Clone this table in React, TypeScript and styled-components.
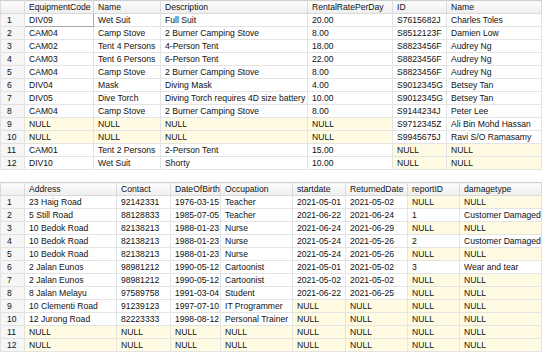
import styled, { createGlobalStyle } from "styled-components";

type Cell = string | null;

interface GridProps {
    columns: { title: string; width: number }[];
    rows: Cell[][];
    focusFirst?: boolean;
}

const GlobalStyle = createGlobalStyle`
  html, body {
    margin: 0;
    padding: 0;
    background: #ffffff;
  }
  body {
    font-family: "Liberation Sans", Arial, sans-serif;
    font-size: 8.6px;
    color: #111111;
  }
`;

const Page = styled.div`
  width: 543px;
  height: 353px;
  display: flex;
  flex-direction: column;
  gap: 12px;
  overflow: hidden;
`;

const Table = styled.table`
  border-collapse: collapse;
  table-layout: fixed;
  width: 541px;
  border-left: 1px solid #cfcfcf;
`;

const Row = styled.tr`
  height: 13px;
`;

const HeadCell = styled.th`
  height: 12px;
  padding: 0 0 0 4px;
  text-align: left;
  font-weight: normal;
  white-space: nowrap;
  overflow: hidden;
  background: linear-gradient(#fdfdfd, #eeeeee);
  border: 1px solid #dadada;
  border-top-color: #d0d0d0;
  line-height: 12px;
`;

const RowNumber = styled.td`
  height: 12px;
  padding: 0 0 0 6px;
  white-space: nowrap;
  background: #f6f6f6;
  border: 1px solid #e2e2e2;
  line-height: 12px;
`;

const DataCell = styled.td<{ $null?: boolean; $focus?: boolean }>`
  height: 12px;
  padding: 0 0 0 4px;
  white-space: nowrap;
  overflow: hidden;
  line-height: 12px;
  background: ${(p) => (p.$null ? "#fffbe3" : "#ffffff")};
  border: 1px solid ${(p) => (p.$focus ? "#a9a9a9" : "#e4e4e4")};
`;

function Grid({ columns, rows, focusFirst }: GridProps) {
    return (
        <Table>
            <colgroup>
                <col style={{ width: 24 }} />
                {columns.map((c, i) => (
                    <col key={i} style={{ width: c.width }} />
                ))}
            </colgroup>
            <thead>
                <Row>
                    <HeadCell />
                    {columns.map((c, i) => (
                        <HeadCell key={i}>{c.title}</HeadCell>
                    ))}
                </Row>
            </thead>
            <tbody>
                {rows.map((r, ri) => (
                    <Row key={ri}>
                        <RowNumber>{ri + 1}</RowNumber>
                        {r.map((v, ci) => (
                            <DataCell key={ci} $null={v === null} $focus={focusFirst && ri === 0 && ci === 0}>
                                {v === null ? "NULL" : v}
                            </DataCell>
                        ))}
                    </Row>
                ))}
            </tbody>
        </Table>
    );
}

const equipmentColumns = [
    { title: "EquipmentCode", width: 69 },
    { title: "Name", width: 67 },
    { title: "Description", width: 147 },
    { title: "RentalRatePerDay", width: 85 },
    { title: "ID", width: 54 },
    { title: "Name", width: 95 },
];

const equipmentRows: Cell[][] = [
    ["DIV09", "Wet Suit", "Full Suit", "20.00", "S7615682J", "Charles Toles"],
    ["CAM04", "Camp Stove", "2 Burner Camping Stove", "8.00", "S8512123F", "Damien Low"],
    ["CAM02", "Tent 4 Persons", "4-Person Tent", "18.00", "S8823456F", "Audrey Ng"],
    ["CAM03", "Tent 6 Persons", "6-Person Tent", "22.00", "S8823456F", "Audrey Ng"],
    ["CAM04", "Camp Stove", "2 Burner Camping Stove", "8.00", "S8823456F", "Audrey Ng"],
    ["DIV04", "Mask", "Diving Mask", "4.00", "S9012345G", "Betsey Tan"],
    ["DIV05", "Dive Torch", "Diving Torch requires 4D size battery", "10.00", "S9012345G", "Betsey Tan"],
    ["CAM04", "Camp Stove", "2 Burner Camping Stove", "8.00", "S9144234J", "Peter Lee"],
    [null, null, null, null, "S9712345Z", "Ali Bin Mohd Hassan"],
    [null, null, null, null, "S9945675J", "Ravi S/O Ramasamy"],
    ["CAM01", "Tent 2 Persons", "2-Person Tent", "15.00", null, null],
    ["DIV10", "Wet Suit", "Shorty", "10.00", null, null],
];

const customerColumns = [
    { title: "Address", width: 92 },
    { title: "Contact", width: 54 },
    { title: "DateOfBirth", width: 50 },
    { title: "Occupation", width: 72 },
    { title: "startdate", width: 53 },
    { title: "ReturnedDate", width: 62 },
    { title: "reportID", width: 52 },
    { title: "damagetype", width: 82 },
];

const customerRows: Cell[][] = [
    ["23 Haig Road", "92142331", "1976-03-15", "Teacher", "2021-05-01", "2021-05-02", null, null],
    ["5 Still Road", "88128833", "1985-07-05", "Teacher", "2021-06-22", "2021-06-24", "1", "Customer Damaged"],
    ["10 Bedok Road", "82138213", "1988-01-23", "Nurse", "2021-06-24", "2021-06-29", null, null],
    ["10 Bedok Road", "82138213", "1988-01-23", "Nurse", "2021-05-24", "2021-05-26", "2", "Customer Damaged"],
    ["10 Bedok Road", "82138213", "1988-01-23", "Nurse", "2021-05-24", "2021-05-26", null, null],
    ["2 Jalan Eunos", "98981212", "1990-05-12", "Cartoonist", "2021-05-01", "2021-05-02", "3", "Wear and tear"],
    ["2 Jalan Eunos", "98981212", "1990-05-12", "Cartoonist", "2021-05-02", "2021-05-02", null, null],
    ["8 Jalan Melayu", "97589758", "1991-03-04", "Student", "2021-06-22", "2021-06-25", null, null],
    ["10 Clementi Road", "91239123", "1997-07-10", "IT Programmer", null, null, null, null],
    ["12 Jurong Road", "82223333", "1998-08-12", "Personal Trainer", null, null, null, null],
    [null, null, null, null, null, null, null, null],
    [null, null, null, null, null, null, null, null],
];

export default function App() {
    return (
        <>
            <GlobalStyle />
            <Page>
                <Grid columns={equipmentColumns} rows={equipmentRows} focusFirst />
                <Grid columns={customerColumns} rows={customerRows} />
            </Page>
        </>
    );
}
